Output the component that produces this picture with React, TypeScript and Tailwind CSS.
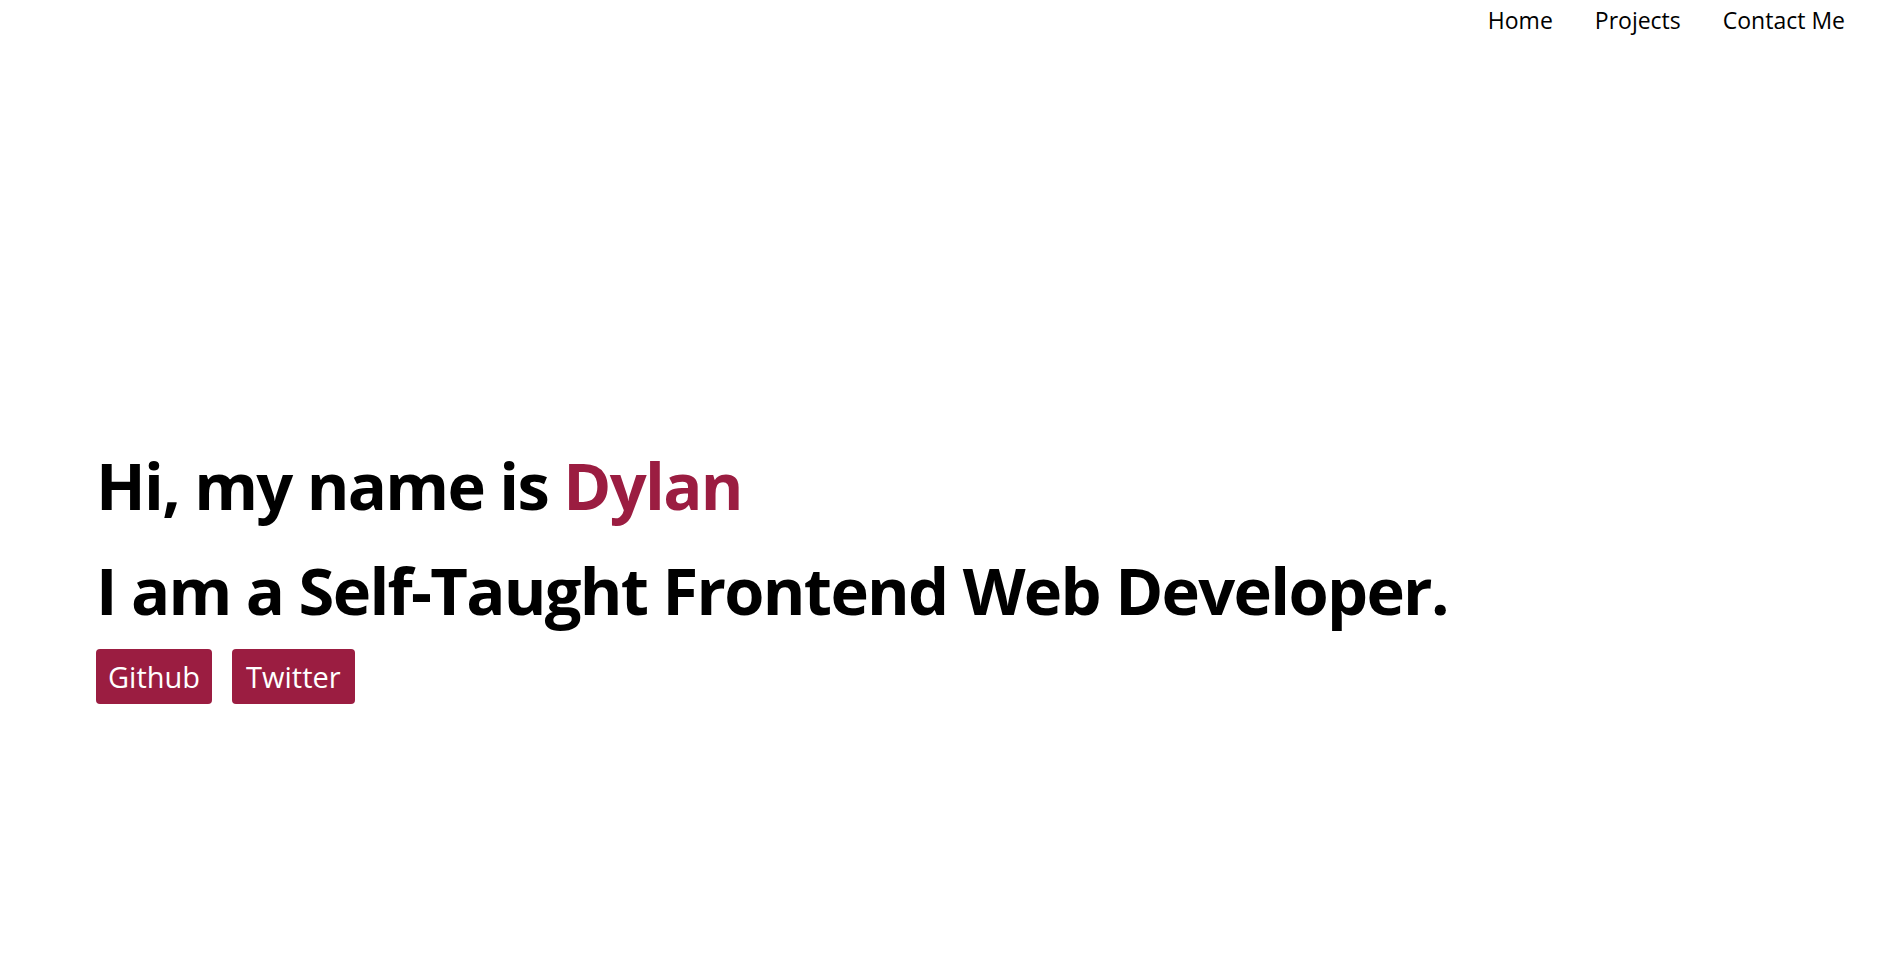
export default function App() {
  const links = ["Home", "Projects", "Contact Me"];
  return (
    <div className="min-h-screen bg-white text-black font-['Open_Sans',sans-serif]">
      <nav className="flex justify-end gap-[42px] pr-[46px] pt-[4px] text-[23px] leading-[32px]">
        {links.map(l => (
          <a key={l} href="#" className="text-black">{l}</a>
        ))}
      </nav>

      <main className="pl-[96px] pt-[397px]">
        <h1 className="text-[65px] font-bold leading-[105px] tracking-[-1.7px]">
          Hi, my name is <span className="text-[#9b1d41]">Dylan</span>
        </h1>
        <h2 className="text-[65px] font-bold leading-[105px] tracking-[-1.7px]">I am a Self-Taught Frontend Web Developer.</h2>
        <div className="flex gap-[20px] mt-[6px]">
          <a href="#" className="bg-[#9b1d41] text-white text-[29px] leading-[55px] px-[12px] rounded-[4px]">Github</a>
          <a href="#" className="bg-[#9b1d41] text-white text-[29px] leading-[55px] px-[14px] rounded-[4px]">Twitter</a>
        </div>
      </main>
    </div>
  );
}
